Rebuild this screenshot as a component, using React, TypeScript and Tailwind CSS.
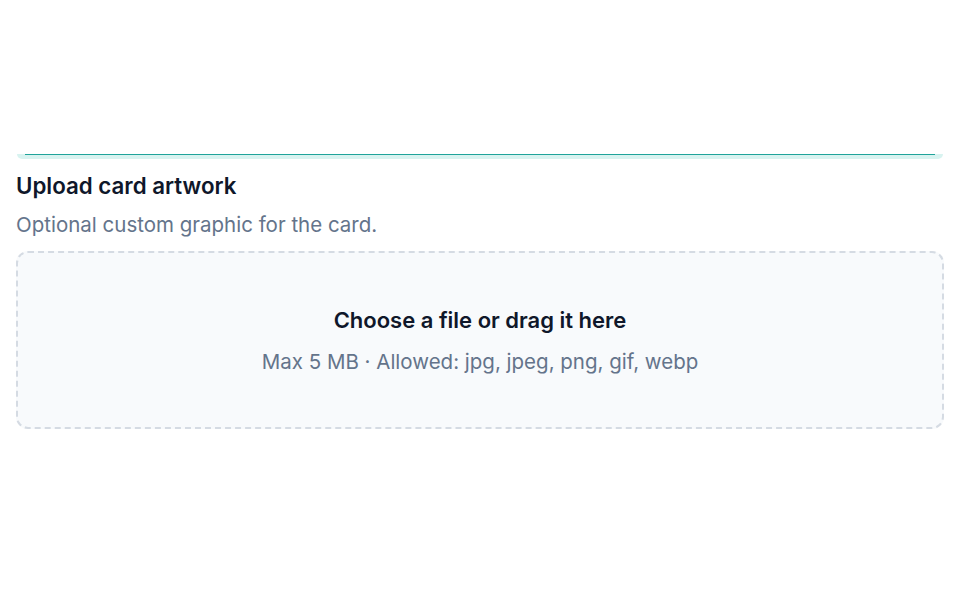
import React from 'react';

const App: React.FC = () => {
  return (
    <div className="w-[960px] h-[600px] bg-white px-4 pt-[154px]" style={{ fontFamily: 'Inter, "Noto Sans", sans-serif' }}>
      {/* bottom edge of the card above */}
      <div className="h-[5px] bg-[#d8f3f0] rounded-b-[6px] mx-px">
        <div className="mx-2 h-px bg-[#1fa39a]" />
      </div>

      <h2 className="mt-[12px] text-[22.3px] leading-[30px] font-semibold text-[#0f172a]">Upload card artwork</h2>
      <p className="mt-[9px] text-[20.5px] leading-[30px] text-[#64748b]">Optional custom graphic for the card.</p>

      <div className="mt-[11px] h-[178px] rounded-[12px] border-2 border-dashed border-[#d5dbe3] bg-[#f8fafc] flex flex-col items-center justify-center">
        <div className="mt-[1px] text-[22px] leading-[30px] font-semibold text-[#0f172a]">Choose a file or drag it here</div>
        <div className="mt-[12px] text-[20.5px] leading-[30px] text-[#64748b]">Max 5 MB · Allowed: jpg, jpeg, png, gif, webp</div>
      </div>
    </div>
  );
};

export default App;
